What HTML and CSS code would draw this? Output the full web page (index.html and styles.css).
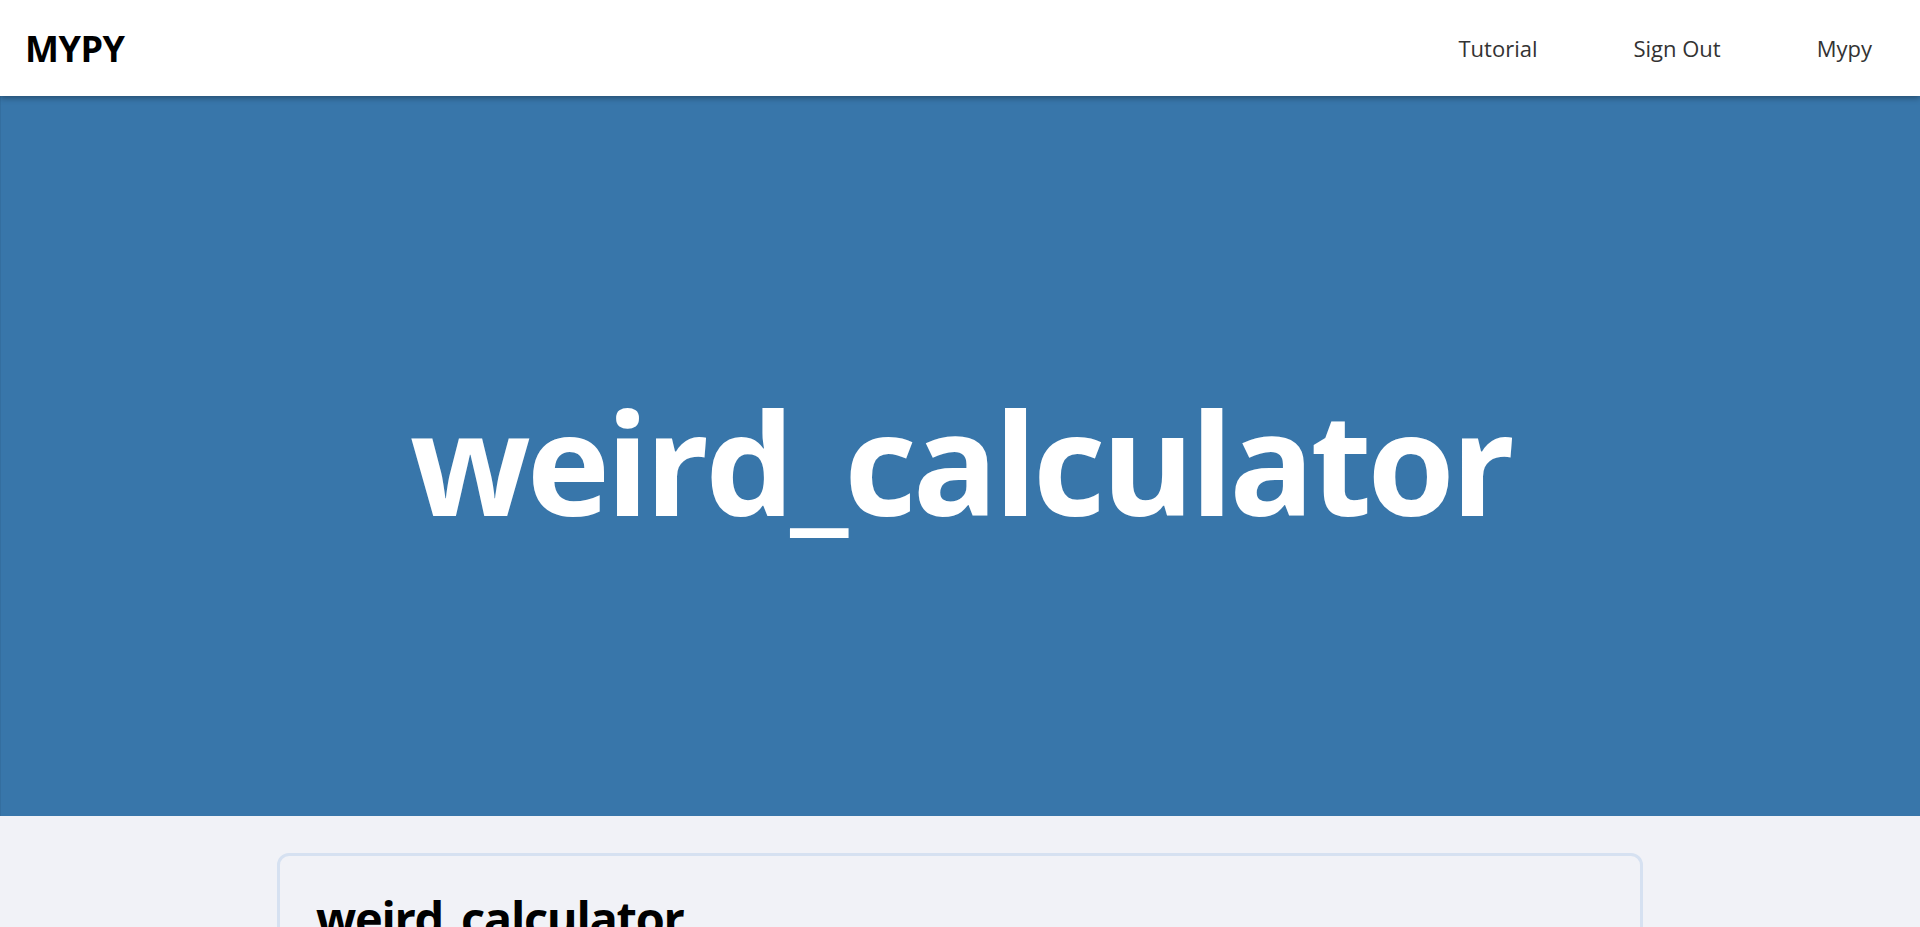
FILE: index.html
```html
<!DOCTYPE html>
<html lang="en">
<head>
<meta charset="utf-8">
<title>weird_calculator</title>
<link rel="stylesheet" href="styles.css">
</head>
<body>
<header class="topbar">
  <div class="brand">MYPY</div>
  <nav class="nav">
    <a class="nav-link" href="#">Tutorial</a>
    <a class="nav-link" href="#">Sign Out</a>
    <a class="nav-link" href="#">Mypy</a>
  </nav>
</header>
<section class="hero">
  <h1 class="hero-title">weird_calculator</h1>
</section>
<main class="content">
  <article class="card">
    <h2 class="card-title">weird_calculator</h2>
  </article>
</main>
</body>
</html>
```

FILE: styles.css
```css
* { box-sizing: border-box; }
html, body { margin: 0; padding: 0; }
body {
  font-family: "Open Sans", "Noto Sans", "Liberation Sans", sans-serif;
  background: #f1f2f7;
  overflow: hidden;
}
.topbar {
  position: relative;
  z-index: 2;
  height: 96px;
  background: #ffffff;
  display: flex;
  align-items: center;
  justify-content: space-between;
  padding-left: 25px;
  box-shadow: 0 2px 6px rgba(0, 0, 0, 0.35);
}
.brand {
  font-size: 36px;
  font-weight: 700;
  color: #000;
  letter-spacing: -0.5px;
}
.nav { display: flex; }
.nav-link {
  padding: 0 48px;
  font-size: 22px;
  color: #333;
  text-decoration: none;
}
.hero {
  height: 720px;
  background: #3876aa;
  border-left: 1px solid #346e9f;
  display: flex;
  align-items: center;
  justify-content: center;
  padding-top: 10px;
}
.hero-title {
  margin: 0;
  color: #fff;
  font-size: 141px;
  font-weight: 700;
  letter-spacing: -4px;
}
.content {
  display: flex;
  justify-content: center;
  padding-top: 37px;
}
.card {
  width: 1366px;
  border: 3px solid #d6e1f1;
  border-radius: 12px;
  padding: 30px 36px;
  min-height: 300px;
}
.card-title {
  margin: 0;
  font-size: 47px;
  font-weight: 700;
  color: #000;
  letter-spacing: -1.3px;
}
```
